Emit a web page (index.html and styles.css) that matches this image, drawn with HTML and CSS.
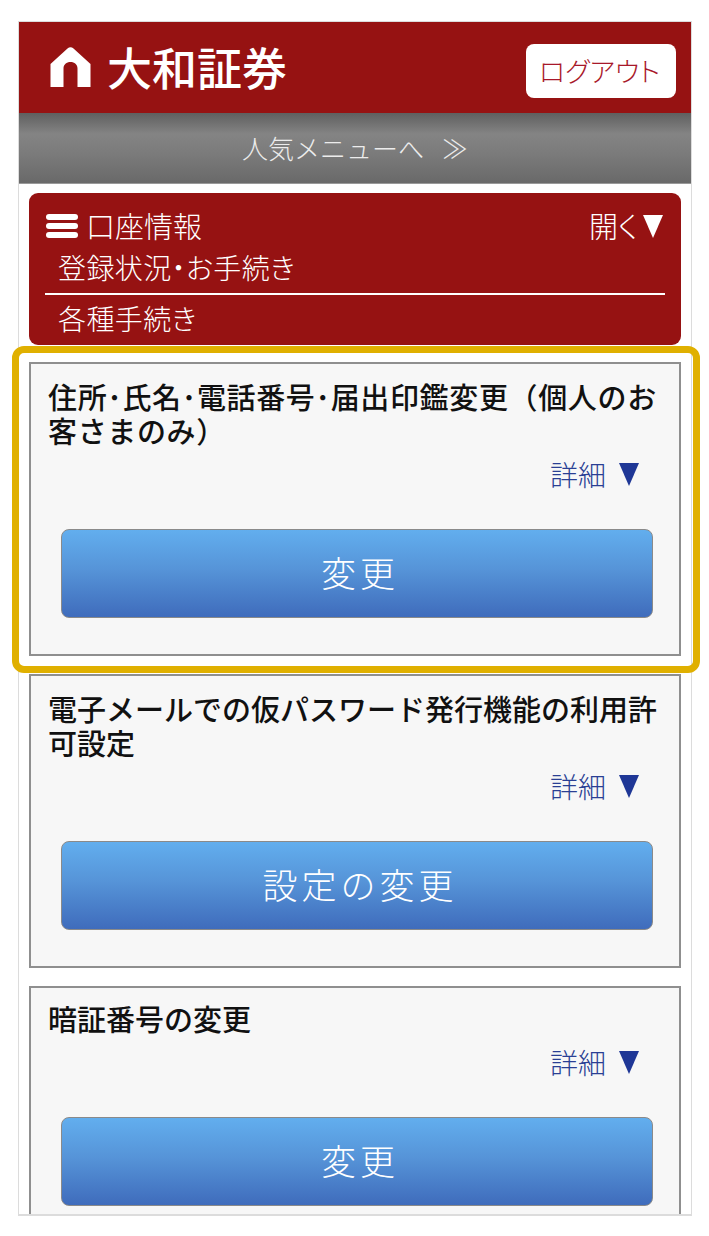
FILE: index.html
```html
<!DOCTYPE html>
<html lang="ja">
<head>
<meta charset="utf-8">
<title>大和証券</title>
<link rel="stylesheet" href="styles.css">
</head>
<body>
<div class="frame">
  <header class="header">
    <div class="brand">
      <svg class="home" viewBox="0 0 40 40" aria-hidden="true"><path d="M0 17 17 1.500Q20 -1 23 1.500L40 17V40H27V21.500C27 17.500 24 15 20 15S13 17.500 13 21.500V40H0Z"/></svg>
      <span class="brand-name">大和証券</span>
    </div>
    <a class="logout">ログアウト</a>
  </header>
  <nav class="popular"><span>人気メニューへ</span><span class="chev">≫</span></nav>
  <main class="content">
    <section class="account">
      <div class="account-top">
        <div class="account-title">
          <span class="burger"><i></i><i></i><i></i></span>
          <span>口座情報</span>
        </div>
        <span class="open">開く<b class="open-arrow"></b></span>
      </div>
      <div class="account-line first">登録状況・お手続き</div>
      <div class="account-line">各種手続き</div>
    </section>

    <article class="card">
      <h2 class="card-title card-title-dots">住所･氏名･電話番号･届出印鑑変更（個人のお客さまのみ）</h2>
      <div class="detail">詳細<b class="detail-arrow"></b></div>
      <a class="btn">変更</a>
    </article>
    <article class="card">
      <h2 class="card-title">電子メールでの仮パスワード発行機能の利用許可設定</h2>
      <div class="detail">詳細<b class="detail-arrow"></b></div>
      <a class="btn">設定の変更</a>
    </article>
    <article class="card card-short">
      <h2 class="card-title">暗証番号の変更</h2>
      <div class="detail">詳細<b class="detail-arrow"></b></div>
      <a class="btn">変更</a>
    </article>
  </main>
</div>
<div class="highlight"></div>
</body>
</html>
```
FILE: styles.css
```css
* { box-sizing: border-box; }
html, body { margin: 0; padding: 0; background: #fff; }
body {
  width: 709px;
  height: 1236px;
  overflow: hidden;
  position: relative;
  padding-top: 21px;
  font-family: "Noto Sans CJK JP", "Liberation Sans", sans-serif;
}
.frame {
  width: 674px;
  height: 1195px;
  margin-left: 18px;
  border: 1px solid #dcdcdc;
  border-bottom-width: 2px;
  overflow: hidden;
  background: #fff;
}
.header {
  height: 91px;
  background: #961212;
  display: flex;
  align-items: center;
  justify-content: space-between;
  padding: 0 15px 0 31px;
}
.brand { display: flex; align-items: center; gap: 16px; color: #fff; }
.home { width: 41px; height: 40px; fill: #fff; margin-top: -2px; }
.brand-name { font-size: 45px; line-height: 60px; font-weight: 500; margin-top: -2px; }
.logout {
  width: 150px;
  height: 54px;
  margin-top: 6px;
  background: #fff;
  border-radius: 8px;
  color: #a8182a;
  font-size: 27px;
  font-weight: 300;
  font-feature-settings: "palt";
  padding-right: 3px;
  display: flex;
  align-items: center;
  justify-content: center;
}
.popular {
  height: 71px;
  background: linear-gradient(#5f5f5f 0%, #848484 30%, #7a7a7a 60%, #696969 100%);
  border-bottom: 1px solid #999;
  color: #ececec;
  font-size: 26px;
  font-weight: 300;
  padding-bottom: 2px;
  display: flex;
  align-items: center;
  justify-content: center;
  gap: 18px;
}
.chev { font-size: 26px; }
.content { padding: 9px 10px 0; }
.account {
  height: 152px;
  background: #961212;
  border-radius: 9px;
  color: #fff;
  padding: 12px 16px 0;
  font-weight: 300;
  font-size: 28px;
}
.account-top { display: flex; justify-content: space-between; height: 40px; align-items: center; }
.account-title { display: flex; align-items: center; gap: 8px; font-size: 29px; }
.burger { display: flex; flex-direction: column; gap: 3px; width: 32px; margin-top: 2px; margin-left: 1px; }
.burger i { display: block; height: 6px; border-radius: 3px; background: #fff; }
.open { display: flex; align-items: center; font-size: 29px; margin-right: 2px; font-feature-settings: "palt"; }
.open-arrow {
  width: 0; height: 0; margin-left: 5px; margin-top: 2px;
  border-left: 10px solid transparent;
  border-right: 10px solid transparent;
  border-top: 23px solid #fff;
}
.account-line {
  height: 46px;
  line-height: 46px;
  padding-left: 13px;
  letter-spacing: .4px;
  font-feature-settings: "palt";
}
.account-line.first { height: 50px; line-height: 44px; border-bottom: 2px solid #fff; }
.card {
  height: 294px;
  margin-top: 18px;
  background: #f7f7f7;
  border: 2px solid #8f8f8f;
  padding: 15px 21px 0 17px;
  position: relative;
  display: flex;
  flex-direction: column;
}
.account + .card { margin-top: 17px; }
.card-title {
  margin: 0;
  height: 83px;
  font-size: 29px;
  line-height: 34px;
  font-weight: 500;
  color: #111;
}
.card-title-dots { letter-spacing: .65px; }
.detail {
  position: absolute;
  right: 40px;
  top: 90px;
  display: flex;
  align-items: center;
  color: #2a3f94;
  font-size: 28px;
  line-height: 40px;
  font-weight: 300;
}
.detail-arrow {
  width: 0; height: 0; margin-left: 13px;
  border-left: 10px solid transparent;
  border-right: 10px solid transparent;
  border-top: 23px solid #1f3796;
}
.btn {
  margin: 67px 5px 0 13px;
  height: 89px;
  flex: none;
  border: 1px solid #8a8a8a;
  border-radius: 8px;
  background: linear-gradient(#62aeee 0%, #5694d8 45%, #3f6cbc 100%);
  color: #fff;
  font-size: 35px;
  font-weight: 300;
  letter-spacing: 4px;
  padding-left: 6px;
  padding-bottom: 5px;
  display: flex;
  align-items: center;
  justify-content: center;
}
.card-short .card-title { height: 40px; margin-top: -2px; }
.card-short .detail { top: 54px; }
.card-short .btn { margin-top: 76px; }
.highlight {
  position: absolute;
  left: 12px;
  top: 346px;
  width: 688px;
  height: 327px;
  border: 7px solid #e0b000;
  border-radius: 12px;
}
```
